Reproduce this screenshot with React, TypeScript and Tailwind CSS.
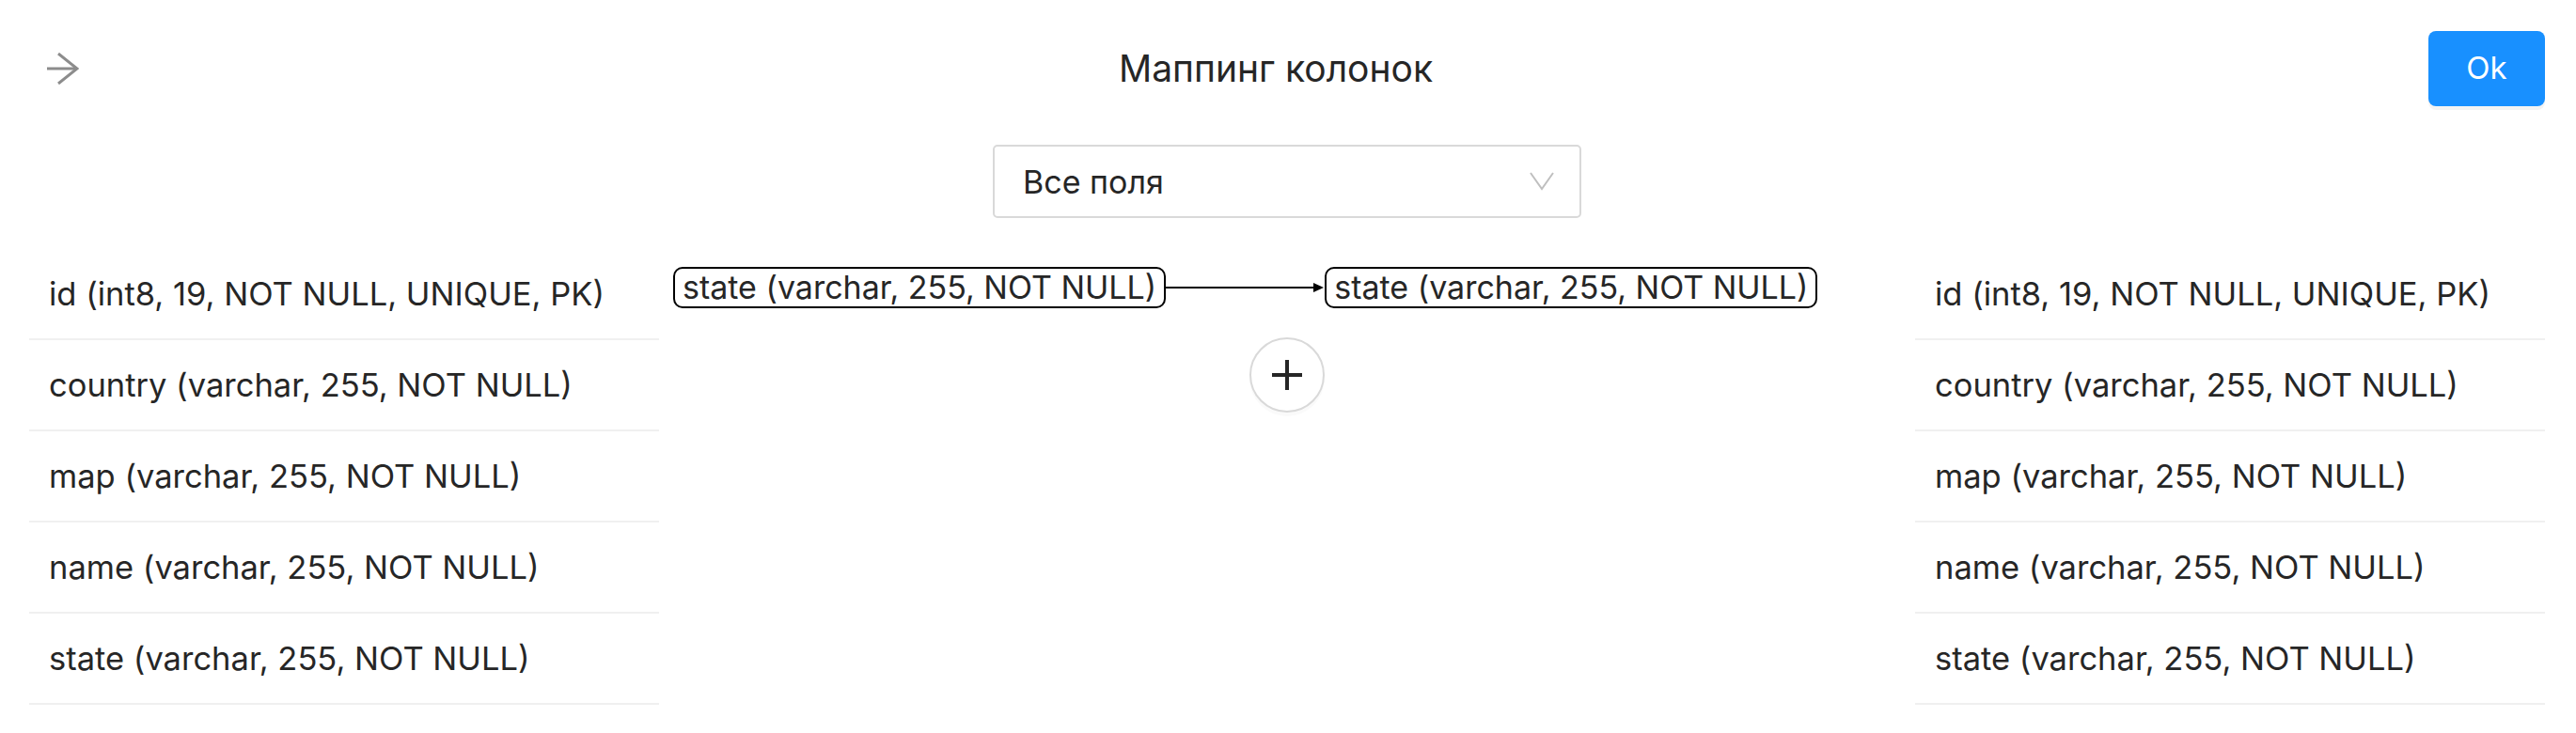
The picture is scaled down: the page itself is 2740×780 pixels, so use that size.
const columns: string[] = [
  "id (int8, 19, NOT NULL, UNIQUE, PK)",
  "country (varchar, 255, NOT NULL)",
  "map (varchar, 255, NOT NULL)",
  "name (varchar, 255, NOT NULL)",
  "state (varchar, 255, NOT NULL)",
];

function ColumnList({ items }: { items: string[] }) {
  return (
    <div className="w-[670px] flex flex-col">
      {items.map((item) => (
        <div
          key={item}
          className="h-[97px] flex items-center pl-[21px] border-b-2 border-[#f0f0f0] text-[34.5px] text-[#262626]"
        >
          {item}
        </div>
      ))}
    </div>
  );
}

function FieldBox({ label }: { label: string }) {
  return (
    <div className="border-2 border-black rounded-[10px] px-[8px] leading-[40px] text-[34px] text-[#262626] whitespace-nowrap">
      {label}
    </div>
  );
}

export default function App() {
  return (
    <div className="w-[2740px] h-[780px] bg-white pl-[31px] pr-[33px] font-['Inter',sans-serif]">
      {/* header */}
      <div className="pt-[33px] grid grid-cols-[1fr_auto_1fr] items-center">
        <div className="pl-[19px] flex items-center">
          <svg width="34" height="34" viewBox="0 0 34 34" fill="none">
            <path d="M0 17 H32" stroke="#8c8c8c" strokeWidth="3" />
            <path d="M12 1 L32 17 L12 33" stroke="#8c8c8c" strokeWidth="3" />
          </svg>
        </div>
        <div className="mr-[24px] text-[39px] text-[#262626]">Маппинг колонок</div>
        <div className="flex justify-end">
          <button className="w-[124px] h-[80px] rounded-[8px] bg-[#1890ff] text-white text-[33px] shadow-[0_4px_0_rgba(0,0,0,0.045)]">
            Ok
          </button>
        </div>
      </div>

      {/* filter select */}
      <div className="mt-[41px] flex justify-center">
        <div className="w-[626px] h-[78px] border-2 border-[#d9d9d9] rounded-[5px] flex items-center justify-between pl-[30px] pr-[27px]">
          <span className="text-[34px] text-[#262626]">Все поля</span>
          <svg width="26" height="20" viewBox="0 0 26 20" fill="none">
            <path d="M1 1 L13 18 L25 1" stroke="#bfbfbf" strokeWidth="2" />
          </svg>
        </div>
      </div>

      {/* mapping area */}
      <div className="mt-[33px] flex">
        <ColumnList items={columns} />
        <div className="flex-1 flex flex-col">
          <div className="pt-[19px] pl-[15px] flex items-center">
            <FieldBox label="state (varchar, 255, NOT NULL)" />
            <svg width="169" height="14" viewBox="0 0 169 14" fill="none">
              <path d="M0 7 H160" stroke="black" strokeWidth="2" />
              <path d="M157 2 L168 7 L157 12 Z" fill="black" />
            </svg>
            <FieldBox label="state (varchar, 255, NOT NULL)" />
          </div>
          <div className="mt-[31px] flex justify-center">
            <button className="w-[80px] h-[80px] rounded-full border-2 border-[#d9d9d9] bg-white flex items-center justify-center shadow-[0_4px_0_rgba(0,0,0,0.02)]">
              <svg width="32" height="32" viewBox="0 0 32 32" fill="none">
                <path d="M16 0 V32 M0 16 H32" stroke="#262626" strokeWidth="4" />
              </svg>
            </button>
          </div>
        </div>
        <ColumnList items={columns} />
      </div>
    </div>
  );
}
